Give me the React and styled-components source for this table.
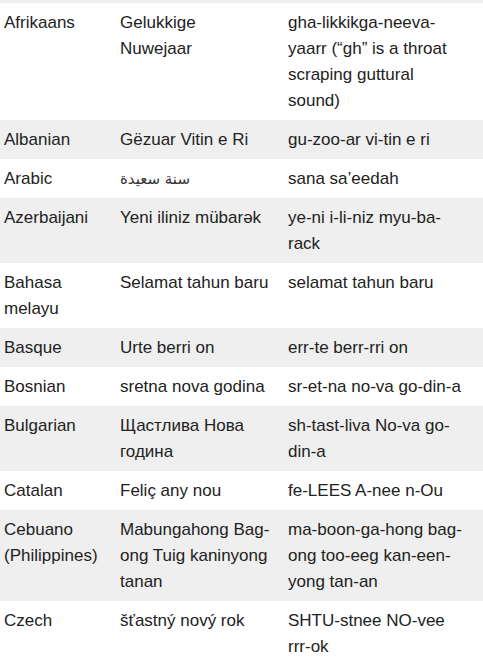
import React from "react";
import styled, { createGlobalStyle } from "styled-components";

const GlobalStyle = createGlobalStyle`
  html, body {
    margin: 0;
    padding: 0;
    background: #ffffff;
  }
  body {
    font-family: "Liberation Sans", Arial, sans-serif;
    color: #222222;
  }
`;

const Table = styled.table`
  width: 483px;
  border-collapse: collapse;
  table-layout: fixed;
  border-top: 3px solid #efefef;
`;

const Col = styled.col`
  width: ${(p) => p.$w}px;
`;

const Row = styled.tr`
  background-color: ${(p) => (p.$shaded ? "#efefef" : "#ffffff")};
`;

const Cell = styled.td`
  padding: 7px ${(p) => p.$pr ?? 8}px 6px 4px;
  vertical-align: top;
  font-size: 17px;
  line-height: 26px;
  color: #222222;
`;

const Arabic = styled.span`
  font-family: "DejaVu Sans", "Noto Sans", sans-serif;
  font-size: 15px;
  color: #333;
`;

const rows = [
  ["Afrikaans", "Gelukkige Nuwejaar", "gha-likkikga-neeva-yaarr (\u201cgh\u201d is a throat scraping guttural sound)"],
  ["Albanian", "Gëzuar Vitin e Ri", "gu-zoo-ar vi-tin e ri"],
  ["Arabic", <Arabic dir="rtl">سنة سعيدة</Arabic>, "sana sa\u2019eedah"],
  ["Azerbaijani", "Yeni iliniz mübarək", "ye-ni i-li-niz myu-ba-rack"],
  ["Bahasa melayu", "Selamat tahun baru", "selamat tahun baru"],
  ["Basque", "Urte berri on", "err-te berr-rri on"],
  ["Bosnian", "sretna nova godina", "sr-et-na no-va go-din-a"],
  ["Bulgarian", "Щастлива Нова година", "sh-tast-liva No-va go-din-a"],
  ["Catalan", "Feliç any nou", "fe-LEES A-nee n-Ou"],
  ["Cebuano (Philippines)", "Mabungahong Bag-ong Tuig kaninyong tanan", "ma-boon-ga-hong bag-ong too-eeg kan-een-yong tan-an"],
  ["Czech", "šťastný nový rok", "SHTU-stnee NO-vee rrr-ok"],
];

export default function App() {
  return (
    <>
      <GlobalStyle />
      <Table>
        <colgroup>
          <Col $w={116} />
          <Col $w={168} />
          <Col $w={199} />
        </colgroup>
        <tbody>
          {rows.map((r, i) => (
            <Row key={i} $shaded={i % 2 === 1}>
              <Cell>{r[0]}</Cell>
              <Cell $pr={13}>{r[1]}</Cell>
              <Cell $pr={19}>{r[2]}</Cell>
            </Row>
          ))}
        </tbody>
      </Table>
    </>
  );
}
